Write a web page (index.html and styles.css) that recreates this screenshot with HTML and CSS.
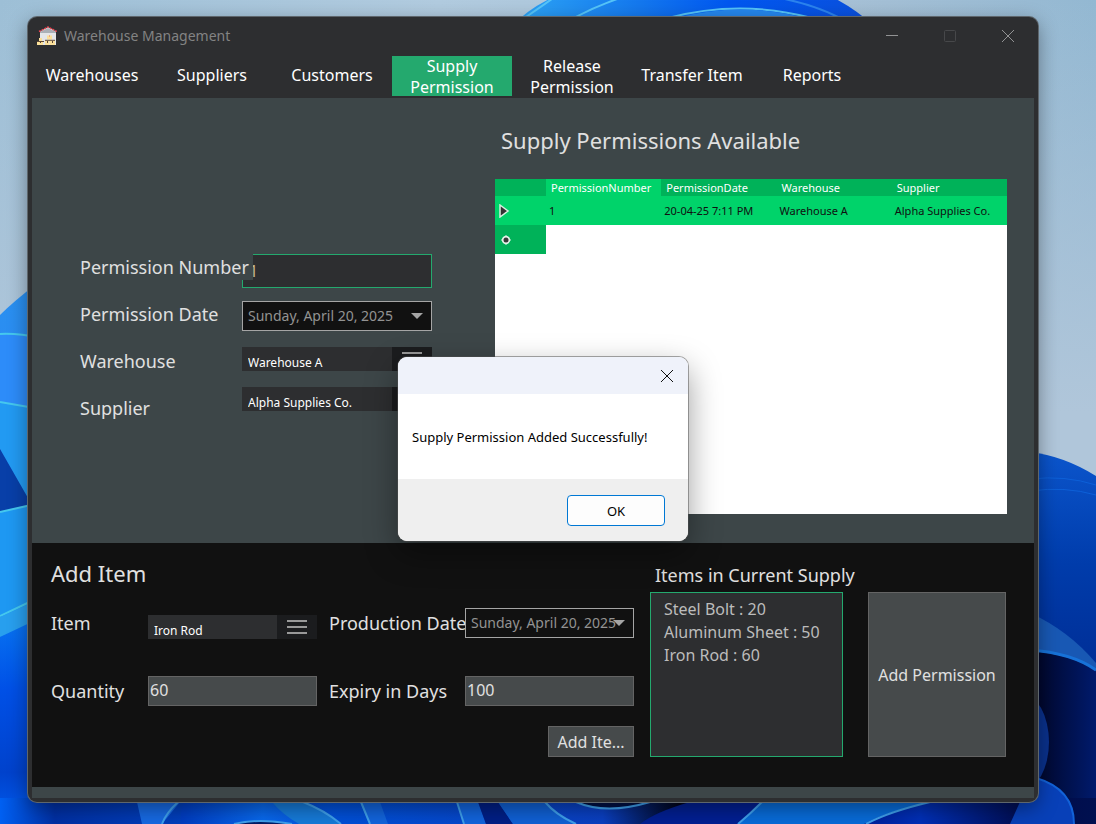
FILE: index.html
```html
<!DOCTYPE html>
<html lang="en">
<head>
<meta charset="utf-8">
<meta name="viewport" content="width=device-width, initial-scale=1">
<title>Warehouse Management</title>
<link rel="stylesheet" href="styles.css">
</head>
<body>
<div class="desktop">
  <svg class="wallpaper" viewBox="0 0 1096 824" preserveAspectRatio="none" aria-hidden="true">
    <defs>
      <linearGradient id="sky" x1="0" y1="0" x2="1" y2="0"><stop offset="0" stop-color="#9dbfd6"/><stop offset=".4" stop-color="#b1cbdf"/><stop offset=".75" stop-color="#a8c1d6"/><stop offset="1" stop-color="#93b8d2"/></linearGradient>
      <linearGradient id="skyFade" x1="0" y1="0" x2="0" y2="1"><stop offset="0" stop-color="#b0c6da" stop-opacity="0"/><stop offset=".5" stop-color="#b0c6da"/></linearGradient>
      <linearGradient id="crest" x1="0" y1="0" x2="1" y2="0"><stop offset="0" stop-color="#2ea6f5"/><stop offset=".35" stop-color="#1478ee"/><stop offset=".6" stop-color="#0057f0"/><stop offset="1" stop-color="#0b50dc"/></linearGradient>
      <linearGradient id="leftTop" x1="0" y1="0" x2="0" y2="1"><stop offset="0" stop-color="#2990f0"/><stop offset=".4" stop-color="#2f86f5"/><stop offset="1" stop-color="#1b7ee8"/></linearGradient>
      <linearGradient id="leftLow" x1="0" y1="0" x2="0" y2="1"><stop offset="0" stop-color="#0874f2"/><stop offset=".35" stop-color="#0050e6"/><stop offset=".75" stop-color="#0042cc"/><stop offset="1" stop-color="#005df0"/></linearGradient>
      <linearGradient id="right" x1="0" y1="0" x2="0" y2="1"><stop offset="0" stop-color="#0b55cc"/><stop offset=".3" stop-color="#003cab"/><stop offset="1" stop-color="#001a78"/></linearGradient>
      <linearGradient id="rightDark" x1="0" y1="0" x2="1" y2="0"><stop offset="0" stop-color="#000524"/><stop offset="1" stop-color="#001a6c"/></linearGradient>
      <linearGradient id="floor" gradientUnits="userSpaceOnUse" x1="0" y1="0" x2="1096" y2="0"><stop offset="0" stop-color="#0060f2"/><stop offset=".05" stop-color="#0030a4"/><stop offset=".3" stop-color="#0050d8"/><stop offset=".55" stop-color="#0a3fc0"/><stop offset=".62" stop-color="#000318"/><stop offset=".68" stop-color="#0a4ad0"/><stop offset=".74" stop-color="#00107c"/><stop offset=".84" stop-color="#0030b8"/><stop offset=".94" stop-color="#000a48"/><stop offset="1" stop-color="#001050"/></linearGradient>
      <linearGradient id="petal" x1="0" y1="0" x2="1" y2="0"><stop offset="0" stop-color="#003cc0"/><stop offset=".5" stop-color="#0868ec"/><stop offset="1" stop-color="#0648d0"/></linearGradient>
    </defs>
    <rect width="1096" height="824" fill="url(#sky)"/>
    <rect width="1096" height="824" fill="url(#skyFade)"/>
    <path d="M512 26Q548-12 620-20H780Q835-10 874 26Z" fill="url(#crest)"/>
    <path d="M526 17Q545 4 556-4M574 18Q598 5 626-4M668 18Q740-1 812 18" fill="none" stroke="#55c4f8" stroke-width="2"/>
    <path d="M676 18Q740 1 806 18Z" fill="#2587ee"/>
    <path d="M780-2Q815 5 840 18" fill="none" stroke="#2b83ee" stroke-width="2"/>
    <path d="M0 315Q14 301 40 281V824H0Z" fill="url(#leftTop)"/>
    <path d="M0 333Q18 333 40 338V410L0 402Z" fill="#2d8cf9"/>
    <path d="M0 402L40 409V520L0 449Z" fill="#229af2"/>
    <path d="M0 449L40 519V506L0 512Z" fill="#083fa8"/>
    <path d="M0 512L40 503V605L0 617Z" fill="#1e98f2"/>
    <path d="M0 334Q18 333 40 338M0 402L40 409M0 512L40 503M0 616L40 597" fill="none" stroke="#45c8ee" stroke-width="2"/>
    <path d="M0 617L40 599V622L0 637Z" fill="#289fee"/>
    <path d="M0 637L40 618V824H0Z" fill="url(#leftLow)"/>
    <path d="M1030 452Q1064 456 1096 476V824H1030Z" fill="url(#right)"/>
    <path d="M1030 479Q1065 475 1096 485M1030 491Q1065 486 1096 495" fill="none" stroke="#0d60d8" stroke-width="1"/>
    <path d="M1030 613Q1068 630 1096 663V672L1030 651Z" fill="#1858b4"/>
    <path d="M1030 651Q1072 654 1096 671V824H1030Z" fill="url(#rightDark)"/>
    <path d="M1030 650Q1072 653 1096 670" fill="none" stroke="#1772d8" stroke-width="3"/>
    <ellipse cx="1022" cy="742" rx="27" ry="48" fill="#0a318c"/>
    <rect y="798" width="1096" height="26" fill="url(#floor)"/>
    <path d="M137 802H180L162 824H142Z" fill="#1769e2"/>
    <path d="M184 802H278L345 824H181Q180 810 184 802Z" fill="url(#petal)"/>
    <path d="M272 802H303Q324 810 341 824H299Q283 815 272 802Z" fill="#167ad8"/>
    <path d="M235 824Q258 819 290 824Z" fill="#001a64"/>
    <path d="M360 802H380L388 824H369ZM457 802H478L486 824H464Z" fill="#1264dc"/>
    <path d="M478 802H498L513 824H486Z" fill="#001f86"/>
    <path d="M498 802H545Q556 816 576 824H513Z" fill="#1060d4"/>
    <path d="M575 802H648Q605 816 575 802Z" fill="#001044"/>
    <path d="M764 802H690Q655 812 640 824H737Z" fill="#021f92"/>
    <path d="M763 802H930Q885 812 864 824H738Z" fill="#086bd8"/>
    <path d="M178 802Q166 813 162 824M303 802Q324 810 341 824M234 824Q258 818 292 824M361 802L370 824M457 802L464 824M545 802Q556 815 576 824M576 802Q606 815 650 802M762 802Q750 814 738 824M930 802Q888 812 866 824" fill="none" stroke="#3fa0ec" stroke-width="2"/>
    <path d="M1030 778Q1074 784 1074 824H1010Q1022 798 1030 778Z" fill="#0840b8"/>
    <path d="M1036 778Q1074 789 1074 824" fill="none" stroke="#1262d8" stroke-width="2"/>
  </svg>

  <div class="window">
    <header class="titlebar">
      <svg class="app-icon" viewBox="0 0 20 20" aria-hidden="true">
        <path d="M3 5.500L11 1l8 4.500V19H3Z" fill="#e4e6e8"/>
        <path d="M3 6l8-4 8 4v1H3Z" fill="#aab0b6"/>
        <path d="M2 5.500L11 1l9 4.500" fill="none" stroke="#ee4652" stroke-width="1.400" stroke-dasharray="2 1"/>
        <path d="M10 9.500h5v4h-5ZM0 15.500h6V19H0ZM2 12h3v3H2ZM8 14.500h4.500V19H8ZM13 14.500h5V19h-5Z" fill="#fbe09a"/>
        <path d="M0 15.500h7M8 14.300h10M3.500 16v1M10.500 15v2M15.500 15v2" stroke="#5d4736" stroke-width="1"/>
        <path d="M12 9.500h1v1h-1Z" fill="#e8724e"/>
      </svg>
      <h1 class="title">Warehouse Management</h1>
      <button class="caption" type="button" aria-label="Minimize"><svg viewBox="0 0 14 14"><path d="M1 6.500h12"/></svg></button>
      <button class="caption caption-off" type="button" aria-label="Maximize" disabled><svg viewBox="0 0 14 14"><rect x="1.500" y="1.500" width="11" height="11" rx="1"/></svg></button>
      <button class="caption" type="button" aria-label="Close"><svg viewBox="0 0 14 14"><path d="M1 1l12 12M13 1L1 13"/></svg></button>
    </header>

    <nav class="tabs">
      <button type="button" class="tab">Warehouses</button>
      <button type="button" class="tab">Suppliers</button>
      <button type="button" class="tab">Customers</button>
      <button type="button" class="tab tab-active">Supply Permission</button>
      <button type="button" class="tab">Release Permission</button>
      <button type="button" class="tab">Transfer Item</button>
      <button type="button" class="tab">Reports</button>
    </nav>

    <main class="content">
      <section class="permission">
        <form class="permission-form">
          <div class="labels">
            <label class="label label-over" for="number">Permission Number</label>
            <label class="label" for="date">Permission Date</label>
            <label class="label" for="warehouse">Warehouse</label>
            <label class="label" for="supplier">Supplier</label>
          </div>
          <div class="fields">
            <input class="number" id="number" type="text" value="1">
            <button class="date" id="date" type="button"><span>Sunday, April 20, 2025</span><svg class="arrow" viewBox="0 0 12 6"><path d="M0 0h12L6 6Z"/></svg></button>
            <div class="combo">
              <select id="warehouse"><option>Warehouse A</option></select>
              <button class="burger" type="button" aria-label="Show warehouses"><svg viewBox="0 0 22 16"><path d="M1 2h20M1 8h20M1 14h20"/></svg></button>
            </div>
            <div class="combo">
              <select id="supplier"><option>Alpha Supplies Co.</option></select>
              <button class="burger" type="button" aria-label="Show suppliers"><svg viewBox="0 0 22 16"><path d="M1 2h20M1 8h20M1 14h20"/></svg></button>
            </div>
          </div>
        </form>

        <div class="available">
          <h2 class="heading">Supply Permissions Available</h2>
          <div class="grid">
            <table>
              <colgroup><col class="col-mark"><col><col><col><col></colgroup>
              <thead>
                <tr><th></th><th class="current">PermissionNumber</th><th>PermissionDate</th><th>Warehouse</th><th>Supplier</th></tr>
              </thead>
              <tbody>
                <tr class="selected">
                  <td class="mark"><svg viewBox="0 0 12 14"><path d="M2 1l8 6-8 6Z" fill="#333" stroke="#d9efe0" stroke-width="1.500"/></svg></td>
                  <td>1</td><td>20-04-25 7:11 PM</td><td>Warehouse A</td><td>Alpha Supplies Co.</td>
                </tr>
                <tr>
                  <td class="mark mark-new"><svg viewBox="0 0 12 14"><path d="M6 2l2.500 2.500L11 7 8.500 9.500 6 12 3.500 9.500 1 7l2.500-2.500Z" fill="#e6f2ea"/><circle cx="6" cy="7" r="4" fill="#e6f2ea"/><circle cx="6" cy="7" r="2.500" fill="#383838"/></svg></td>
                  <td colspan="4"></td>
                </tr>
              </tbody>
            </table>
          </div>
        </div>
      </section>

      <section class="items">
        <form class="item-form">
          <h2 class="heading item-heading">Add Item</h2>
          <label class="label" for="item">Item</label>
          <div class="combo combo-item">
            <select id="item"><option>Iron Rod</option></select>
            <button class="burger" type="button" aria-label="Show items"><svg viewBox="0 0 22 16"><path d="M1 2h20M1 8h20M1 14h20"/></svg></button>
          </div>
          <label class="label label-second" for="produced">Production Date</label>
          <button class="date" id="produced" type="button"><span>Sunday, April 20, 2025</span><svg class="arrow" viewBox="0 0 12 6"><path d="M0 0h12L6 6Z"/></svg></button>
          <label class="label" for="quantity">Quantity</label>
          <input class="text" id="quantity" type="text" value="60">
          <label class="label label-second" for="expiry">Expiry in Days</label>
          <input class="text" id="expiry" type="text" value="100">
          <button class="button add-item" type="button">Add Ite...</button>
        </form>

        <div class="supply">
          <h3 class="label supply-label">Items in Current Supply</h3>
          <ul class="supply-list">
            <li>Steel Bolt : 20</li>
            <li>Aluminum Sheet : 50</li>
            <li>Iron Rod : 60</li>
          </ul>
        </div>

        <button class="button add-permission" type="button">Add Permission</button>
      </section>
    </main>

    <div class="dialog" role="alertdialog" aria-labelledby="message">
      <div class="dialog-title"><button class="dialog-close" type="button" aria-label="Close message"><svg viewBox="0 0 14 14"><path d="M1 1l12 12M13 1L1 13"/></svg></button></div>
      <p class="dialog-text" id="message">Supply Permission Added Successfully!</p>
      <div class="dialog-actions"><button class="ok" type="button">OK</button></div>
    </div>
  </div>
</div>
</body>
</html>
```
FILE: styles.css
```css
* { box-sizing: border-box; }

body {
  margin: 0;
  font-family: "Noto Sans", "Open Sans", sans-serif;
  font-size: 16px;
  color: #e0e0e0;
}

button, input, select {
  margin: 0;
  padding: 0;
  border: 0;
  border-radius: 0;
  font: inherit;
  color: inherit;
  background: none;
}

h1, h2, h3, p, ul {
  margin: 0;
  padding: 0;
  font-weight: 400;
  list-style: none;
}

svg { display: block; }

.desktop {
  position: relative;
  display: flex;
  min-height: 100vh;
  padding: 17px 58px 22px 28px;
  overflow: hidden;
}

.wallpaper {
  position: absolute;
  inset: 0;
  width: 100%;
  height: 100%;
}

.window {
  position: relative;
  display: flex;
  flex: 1;
  flex-direction: column;
  min-width: 0;
  padding: 0 4px 4px;
  border-radius: 9px;
  background: #2d2e30;
  box-shadow: 0 0 0 1px #5e666c, 0 6px 20px rgba(0, 0, 0, 0.4);
}

/* Title bar */
.titlebar {
  display: flex;
  align-items: center;
  height: 39px;
  padding: 0 0 2px 5px;
}

.app-icon { width: 20px; height: 20px; }

.title {
  flex: 1;
  margin-left: 7px;
  font-size: 14px;
  line-height: 20px;
  color: #838383;
}

.caption {
  display: grid;
  place-items: center;
  width: 58px;
  height: 36px;
}

.caption:last-child { margin-right: -3px; }

.caption svg {
  width: 14px;
  height: 14px;
  fill: none;
  stroke: #929394;
}

.caption-off svg { stroke: #47484a; }

/* Tabs */
.tabs {
  display: flex;
  height: 42px;
  padding-bottom: 2px;
}

.tab {
  width: 120px;
  padding: 0 8px 2px;
  font-size: 16px;
  line-height: 21px;
  color: #fff;
  text-align: center;
}

.tab-active { background: #24a96e; }

/* Content */
.content {
  display: flex;
  flex: 1;
  flex-direction: column;
  padding-bottom: 11px;
  background: #3d4648;
}

.permission {
  display: grid;
  flex: 1;
  grid-template-columns: minmax(0, 463fr) minmax(0, 512fr);
  padding: 27px 27px 29px 0;
}

.permission-form {
  display: grid;
  grid-template-columns: 162px minmax(0, 190px);
  align-content: start;
  padding: 129px 0 0 48px;
}

.labels { display: grid; grid-auto-rows: 47px; justify-items: start; align-items: start; }

.label {
  font-size: 18px;
  line-height: 26px;
  white-space: nowrap;
}

.label-over {
  position: relative;
  z-index: 1;
  padding-right: 4px;
  background: #3d4648;
}

.fields { display: flex; flex-direction: column; gap: 16px; }

.number {
  width: 100%;
  height: 34px;
  padding-left: 6px;
  border: 1px solid #24a96e;
  font-size: 16px;
  color: #c8b890;
  background: #2d2e30;
}

.date {
  display: flex;
  align-items: center;
  justify-content: space-between;
  width: 100%;
  height: 30px;
  padding: 0 8px 0 5px;
  border: 1px solid #a5a5a5;
  font-size: 14px;
  line-height: 20px;
  white-space: nowrap;
  color: #939393;
  background: #111;
}

.fields .date { margin-top: -3px; }

.arrow {
  flex: none;
  width: 12px;
  height: 6px;
  margin-left: -4px;
  fill: #a5a5a5;
}

.combo {
  display: flex;
  width: 100%;
  height: 24px;
  background: #2d2e30;
}

.combo select {
  flex: 1;
  min-width: 0;
  padding: 7px 0 0 6px;
  appearance: none;
  font-size: 12px;
  line-height: 17px;
  color: #fff;
}

.burger {
  display: grid;
  place-items: center;
  width: 40px;
  background: #1b1c1e;
}

.burger svg {
  width: 22px;
  height: 16px;
  fill: none;
  stroke: #999;
  stroke-width: 2;
}

/* Permissions table */
.available {
  display: flex;
  flex-direction: column;
  gap: 24px;
}

.heading {
  font-size: 22px;
  line-height: 30px;
  white-space: nowrap;
}

.available .heading { padding-left: 6px; }

.grid { flex: 1; background: #fff; }

table {
  width: 100%;
  border-collapse: collapse;
  table-layout: fixed;
  font-size: 11px;
  line-height: 17px;
  color: #101010;
}

.col-mark { width: 51px; }

th {
  height: 17px;
  padding: 0 0 0 5px;
  font-weight: 400;
  text-align: left;
  white-space: nowrap;
  color: #fff;
  background: #00b259;
}

.current, .selected td { background: #00d36a; }

td {
  height: 29px;
  padding: 0 0 0 3px;
  white-space: nowrap;
}

.mark svg { width: 12px; height: 14px; }
.mark-new { padding-left: 5px; background: #00b259; }

/* Add item panel */
.items {
  display: grid;
  grid-template-columns: minmax(0, 602fr) minmax(0, 193fr) minmax(0, 147fr);
  column-gap: 16px;
  height: 244px;
  padding: 15px 28px 30px 0;
  background: #111;
}

.item-form {
  display: grid;
  grid-template-columns: 97px minmax(0, 169fr) 148px minmax(0, 169fr);
  grid-template-rows: 30px 70px 66px 33px;
  align-items: center;
  padding-left: 19px;
}

.item-heading { grid-column: 1 / -1; }
.label-second { padding-left: 12px; }
.combo-item { margin-top: 8px; }

.text {
  width: 100%;
  height: 30px;
  padding: 0 1px 2px;
  border: 1px solid #646464;
  font-size: 16px;
  background: #464a4b;
}

.button {
  border: 1px solid #646464;
  font-size: 16px;
  line-height: 22px;
  white-space: nowrap;
  background: #464a4b;
}

.add-item {
  grid-column: 4;
  align-self: end;
  justify-self: end;
  width: 86px;
  height: 31px;
}

.supply {
  display: flex;
  flex-direction: column;
  gap: 4px;
  padding-top: 4px;
}

.supply-label { padding-left: 5px; }

.supply-list {
  flex: 1;
  padding: 5px 13px;
  border: 1px solid #24a96e;
  font-size: 16px;
  line-height: 23px;
  white-space: nowrap;
  color: #bcbcbc;
  background: #2d2e30;
}

.add-permission { margin: 34px 0 0 9px; }

/* Message box */
.dialog {
  position: absolute;
  top: 340px;
  left: 370px;
  z-index: 2;
  width: 290px;
  overflow: hidden;
  border-radius: 9px;
  font-size: 13px;
  line-height: 18px;
  color: #000;
  background: #fff;
  box-shadow: 0 0 0 1px rgba(80, 80, 80, 0.5), 0 12px 32px rgba(0, 0, 0, 0.4);
}

.dialog-title {
  display: flex;
  justify-content: flex-end;
  height: 37px;
  background: #eff2fa;
}

.dialog-close { display: grid; place-items: center; width: 42px; }
.dialog-close svg { width: 14px; height: 14px; fill: none; stroke: #111; }
.dialog-text { padding: 34px 14px 33px; white-space: nowrap; }

.dialog-actions {
  display: flex;
  justify-content: flex-end;
  padding: 16px 23px 15px;
  background: #efefef;
}

.ok {
  width: 98px;
  height: 31px;
  border: 1px solid #0078d4;
  border-radius: 4px;
  background: #fdfdfd;
}
```
